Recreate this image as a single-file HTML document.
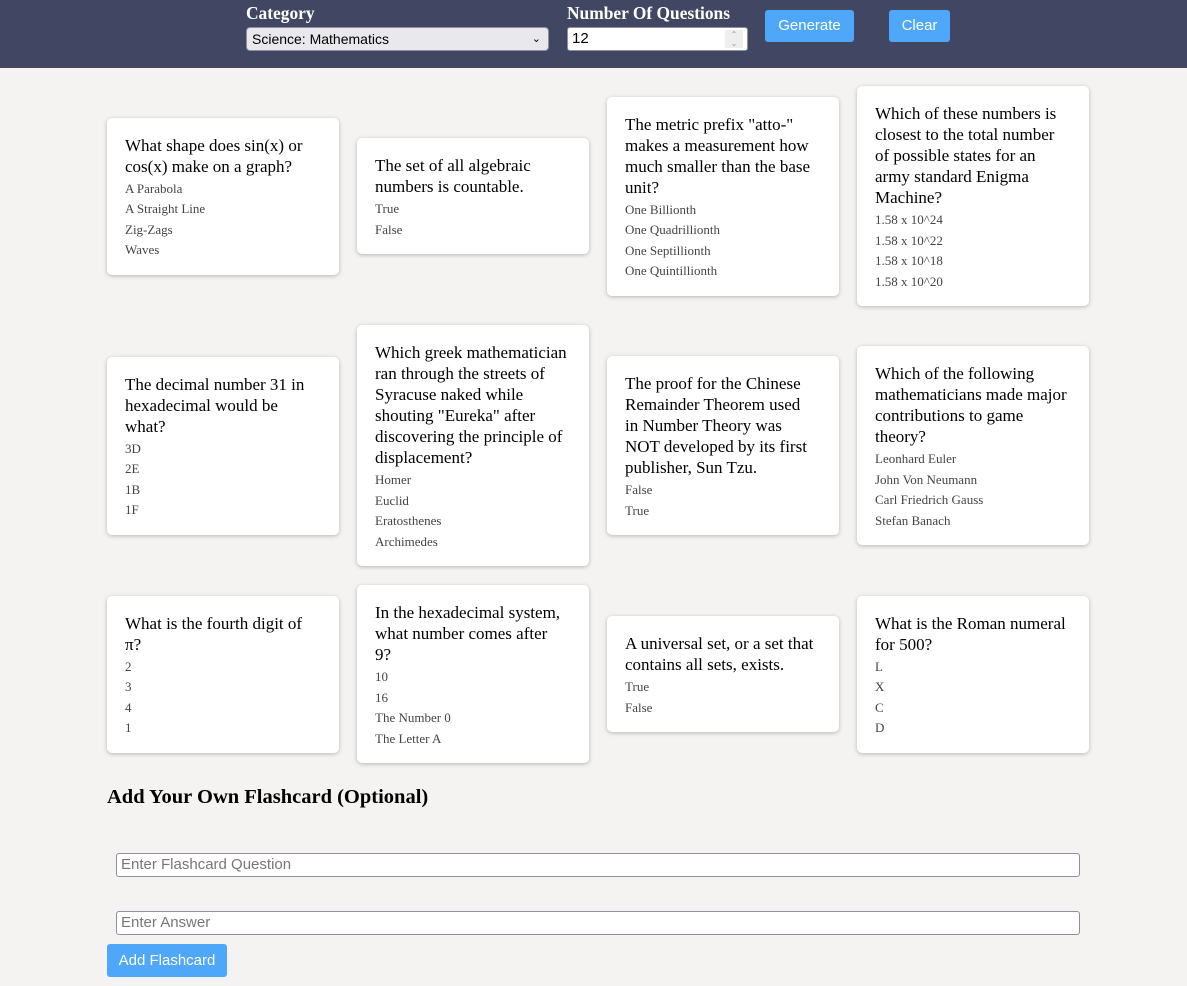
<!DOCTYPE html>
<html><head><style>
body{margin:0;background:#f4f3f1;font-family:"Liberation Serif",serif;width:1187px;height:986px;overflow:hidden;position:relative}
.hdr{height:68px;background:#414762;position:relative}
.lbl{position:absolute;color:#fff;font-weight:bold;font-size:17.4px;top:3px}
.sel{position:absolute;left:246px;top:27px;background:#e9e9ed;border:1px solid #8f8f9d;border-radius:4px;font-family:"Liberation Sans",sans-serif;font-size:14px;line-height:22px;padding-left:5px;box-sizing:border-box;width:303px;height:24px;color:#000}
.sel span{position:absolute;right:7px;top:0;font-size:11px}
.num{position:absolute;left:567px;top:27px;width:181px;height:24px;background:#fff;border:1px solid #8f8f9d;border-radius:3px;box-sizing:border-box;font-family:"Liberation Sans",sans-serif;font-size:15px;line-height:22px;padding-left:4px}
.spin{position:absolute;right:4px;top:2px;width:18px;height:18px;background:#eee;color:#999;font-size:8px;line-height:9px;text-align:center}
.btn{position:absolute;background:#4ea7f8;color:#fff;font-family:"Liberation Sans",sans-serif;font-size:15px;text-align:center;border-radius:3px}
.grid{position:absolute;left:107px;top:86px}
.row{display:flex;align-items:center;gap:18px;margin-bottom:19px}
.card{width:232px;background:#fff;border-radius:5px;box-shadow:0 1px 4px rgba(0,0,0,.25);padding:17px 18px 14px;box-sizing:border-box}
.q{font-size:17px;line-height:21px;margin-bottom:2px;white-space:nowrap}
.a{font-size:13px;line-height:20.5px;color:#444}
h2{position:absolute;left:107px;top:786px;margin:0;font-size:20.5px}
.inp{position:absolute;left:116px;width:964px;height:24px;border:1px solid #8f8f9d;border-radius:3px;background:#fff;box-sizing:border-box;font-family:"Liberation Sans",sans-serif;font-size:15px;color:#777;padding-left:4px;line-height:22px}
</style></head><body>
<div class="hdr">
<div class="lbl" style="left:246px">Category</div>
<div class="lbl" style="left:567px">Number Of Questions</div>
<div class="sel">Science: Mathematics<span>&#8964;</span></div>
<div class="num">12<div class="spin">&#8963;<br>&#8964;</div></div>
<div class="btn" style="left:765px;top:10px;width:89px;height:32px;line-height:32px">Generate</div>
<div class="btn" style="left:889px;top:10px;width:61px;height:32px;line-height:32px">Clear</div>
</div>
<div class="grid">
<div class="row">
<div class="card"><div class="q">What shape does sin(x) or<br>cos(x) make on a graph?</div><div class="a">A Parabola</div><div class="a">A Straight Line</div><div class="a">Zig-Zags</div><div class="a">Waves</div></div>
<div class="card"><div class="q">The set of all algebraic<br>numbers is countable.</div><div class="a">True</div><div class="a">False</div></div>
<div class="card"><div class="q">The metric prefix "atto-"<br>makes a measurement how<br>much smaller than the base<br>unit?</div><div class="a">One Billionth</div><div class="a">One Quadrillionth</div><div class="a">One Septillionth</div><div class="a">One Quintillionth</div></div>
<div class="card"><div class="q">Which of these numbers is<br>closest to the total number<br>of possible states for an<br>army standard Enigma<br>Machine?</div><div class="a">1.58 x 10^24</div><div class="a">1.58 x 10^22</div><div class="a">1.58 x 10^18</div><div class="a">1.58 x 10^20</div></div>
</div>
<div class="row">
<div class="card"><div class="q">The decimal number 31 in<br>hexadecimal would be<br>what?</div><div class="a">3D</div><div class="a">2E</div><div class="a">1B</div><div class="a">1F</div></div>
<div class="card"><div class="q">Which greek mathematician<br>ran through the streets of<br>Syracuse naked while<br>shouting "Eureka" after<br>discovering the principle of<br>displacement?</div><div class="a">Homer</div><div class="a">Euclid</div><div class="a">Eratosthenes</div><div class="a">Archimedes</div></div>
<div class="card"><div class="q">The proof for the Chinese<br>Remainder Theorem used<br>in Number Theory was<br>NOT developed by its first<br>publisher, Sun Tzu.</div><div class="a">False</div><div class="a">True</div></div>
<div class="card"><div class="q">Which of the following<br>mathematicians made major<br>contributions to game<br>theory?</div><div class="a">Leonhard Euler</div><div class="a">John Von Neumann</div><div class="a">Carl Friedrich Gauss</div><div class="a">Stefan Banach</div></div>
</div>
<div class="row">
<div class="card"><div class="q">What is the fourth digit of<br>π?</div><div class="a">2</div><div class="a">3</div><div class="a">4</div><div class="a">1</div></div>
<div class="card"><div class="q">In the hexadecimal system,<br>what number comes after<br>9?</div><div class="a">10</div><div class="a">16</div><div class="a">The Number 0</div><div class="a">The Letter A</div></div>
<div class="card"><div class="q">A universal set, or a set that<br>contains all sets, exists.</div><div class="a">True</div><div class="a">False</div></div>
<div class="card"><div class="q">What is the Roman numeral<br>for 500?</div><div class="a">L</div><div class="a">X</div><div class="a">C</div><div class="a">D</div></div>
</div>
</div>
<h2>Add Your Own Flashcard (Optional)</h2>
<div class="inp" style="top:853px">Enter Flashcard Question</div>
<div class="inp" style="top:911px">Enter Answer</div>
<div class="btn" style="left:107px;top:944px;width:120px;height:33px;line-height:33px">Add Flashcard</div>
</body></html>
